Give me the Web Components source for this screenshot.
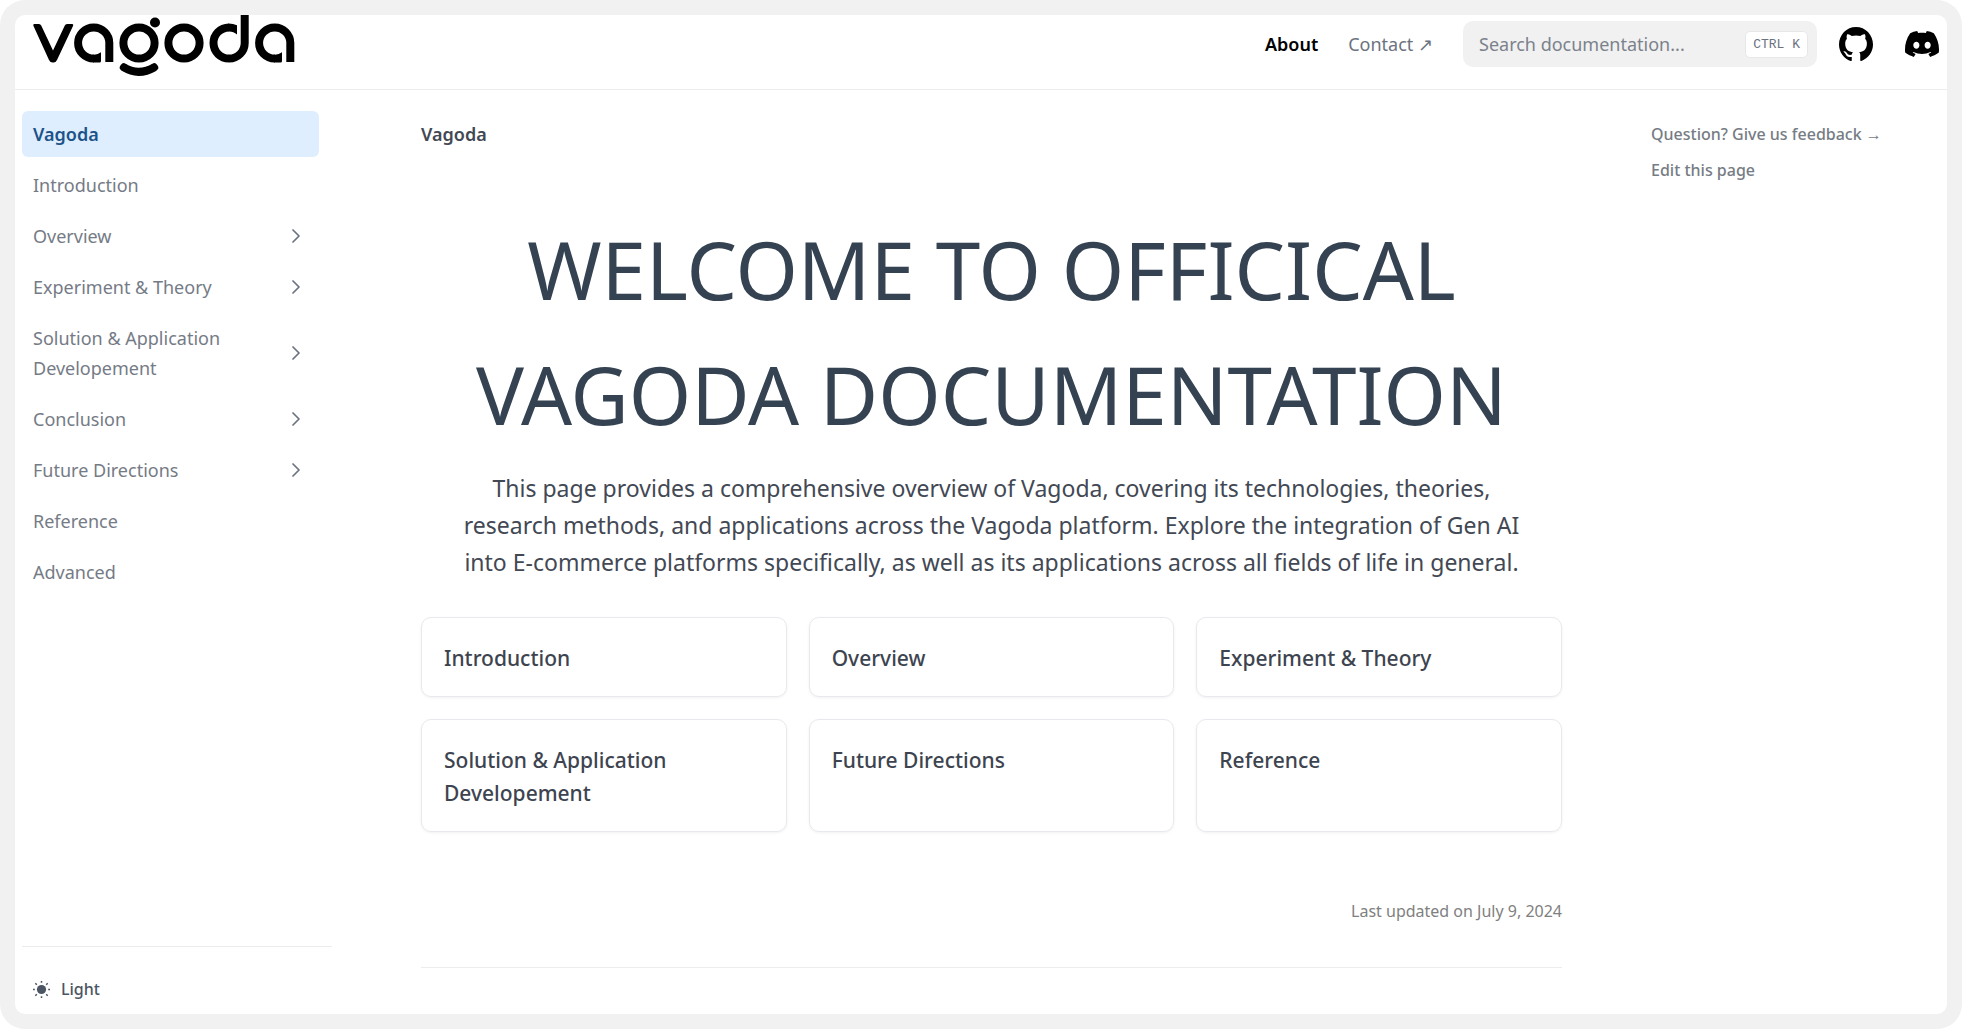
<!DOCTYPE html>
<html lang="en">
<head>
<meta charset="utf-8">
<meta name="viewport" content="width=device-width, initial-scale=1">
<title>Vagoda</title>
<style>
  html { background: #fff; }
  body { margin: 0; font-family: "Noto Sans", "Open Sans", sans-serif; font-size: 18px; line-height: 30px; color: #424854; }
</style>
</head>
<body>
<docs-app></docs-app>

<template id="t-app">
  <style>
    :host { display: block; box-sizing: border-box; min-height: 100vh; padding: 15px; background: #f1f1f1; border-radius: 25px; }
    .panel { display: flex; flex-direction: column; box-sizing: border-box; min-height: calc(100vh - 30px); background: #fff; border-radius: 10px; overflow: hidden; }
    .body { flex: 1; display: grid; grid-template-columns: 317px minmax(0, 1fr) 314px; }
  </style>
  <div class="panel">
    <docs-header></docs-header>
    <div class="body">
      <docs-sidebar></docs-sidebar>
      <docs-content></docs-content>
      <docs-aside></docs-aside>
    </div>
  </div>
</template>

<template id="t-header">
  <style>
    :host { display: block; border-bottom: 1px solid #ececec; }
    header { display: flex; height: 74px; padding: 0 8px 0 18px; }
    .logo { flex: none; height: 62px; margin-right: auto; }
    .logo svg, .icon svg { display: block; }
    nav { display: flex; align-items: center; height: 58px; }
    nav a { color: #6b7280; text-decoration: none; white-space: nowrap; margin-right: 30px; }
    nav a.active { color: #000; font-weight: 600; }
    docs-search { margin-right: 22px; }
    nav a.icon { color: #000; margin: 0; }
    nav a.icon + a.icon { margin-left: 32px; }
  </style>
  <header>
    <a class="logo" href="#" aria-label="Vagoda home">
      <svg width="262" height="62" viewBox="33 15 262 62" fill="none" stroke="#000" stroke-width="8">
        <path d="M34.500 24 H39 Q40.500 24 41.200 25.500 L53 50.500 L64.800 25.500 Q65.500 24 67 24 H72 Q73.800 24 73 26 L57 60 Q55.800 62.600 53.500 62.600 H52.500 Q50.300 62.600 49 60 L33.500 26 Q32.800 24 34.500 24Z" fill="#000" stroke="none"/>
        <path d="M109.300 62 V43 A15.600 15.600 0 1 0 93.700 58.600"/>
        <path d="M93 62.600 H99.500 Q101 62.600 101 61 V52.200 A11.600 11.600 0 0 1 93 54.600Z" fill="#000" stroke="none"/>
        <circle cx="139" cy="43" r="15.600"/>
        <circle cx="155" cy="22.500" r="5" fill="#000" stroke="none"/>
        <path d="M123.500 67.200 Q138.500 76.500 154.500 67.200" stroke-linejoin="round"/>
        <path d="M123.800 66.800 L123.300 67.500 M154.200 66.800 L154.700 67.500" stroke-linecap="round" stroke-width="7"/>
        <circle cx="184" cy="43" r="15.600"/>
        <path d="M244.700 12 V43 A15.600 15.600 0 1 1 229 27.400"/>
        <path d="M228.500 23.400 A19.600 19.600 0 0 1 237 25.200 V34.600 A11.600 11.600 0 0 0 228.500 31.400Z" fill="#000" stroke="none"/>
        <path d="M290.300 62 V43 A15.600 15.600 0 1 0 274.700 58.600"/>
        <path d="M274 62.600 H280.500 Q282 62.600 282 61 V52.200 A11.600 11.600 0 0 1 274 54.600Z" fill="#000" stroke="none"/>
      </svg>
    </a>
    <nav>
      <a class="active" href="#about">About</a>
      <a href="#contact">Contact ↗</a>
      <docs-search></docs-search>
      <a class="icon" href="#github" aria-label="GitHub">
        <svg width="34" height="34" viewBox="3 3 18 18" fill="currentColor"><path d="M12 3C7.0275 3 3 7.12937 3 12.2276C3 16.3109 5.57625 19.7597 9.15374 20.9824C9.60374 21.0631 9.77249 20.7863 9.77249 20.5441C9.77249 20.3249 9.76125 19.5982 9.76125 18.8254C7.5 19.2522 6.915 18.2602 6.735 17.7412C6.63375 17.4759 6.19499 16.6569 5.8125 16.4378C5.4975 16.2647 5.0475 15.838 5.80124 15.8264C6.51 15.8149 7.01625 16.4954 7.18499 16.7723C7.99499 18.1679 9.28875 17.7758 9.80625 17.5335C9.885 16.9337 10.1212 16.53 10.38 16.2993C8.3775 16.0687 6.285 15.2728 6.285 11.7432C6.285 10.7397 6.63375 9.9092 7.20749 9.26326C7.1175 9.03257 6.8025 8.08674 7.2975 6.81794C7.2975 6.81794 8.05125 6.57571 9.77249 7.76377C10.4925 7.55615 11.2575 7.45234 12.0225 7.45234C12.7875 7.45234 13.5525 7.55615 14.2725 7.76377C15.9937 6.56418 16.7475 6.81794 16.7475 6.81794C17.2424 8.08674 16.9275 9.03257 16.8375 9.26326C17.4113 9.9092 17.76 10.7281 17.76 11.7432C17.76 15.2843 15.6563 16.0687 13.6537 16.2993C13.98 16.5877 14.2613 17.1414 14.2613 18.0065C14.2613 19.2407 14.25 20.2326 14.25 20.5441C14.25 20.7863 14.4188 21.0746 14.8688 20.9824C16.6554 20.364 18.2079 19.1866 19.3078 17.6162C20.4077 16.0457 20.9995 14.1611 21 12.2276C21 7.12937 16.9725 3 12 3Z"/></svg>
      </a>
      <a class="icon" href="#discord" aria-label="Discord">
        <svg width="34" height="26" viewBox="0 5 30.67 23.25" fill="currentColor"><path d="M26.0015 6.9529C24.0021 6.03845 21.8787 5.37198 19.6623 5C19.3833 5.48048 19.0733 6.13144 18.8563 6.64292C16.4989 6.30193 14.1585 6.30193 11.8336 6.64292C11.6166 6.13144 11.2911 5.48048 11.0276 5C8.79575 5.37198 6.67235 6.03845 4.6869 6.9529C0.672601 12.8736 -0.41235 18.6548 0.130124 24.3585C2.79599 26.2959 5.36889 27.4739 7.89682 28.2489C8.51679 27.4119 9.07477 26.5129 9.55525 25.5675C8.64079 25.2265 7.77283 24.808 6.93587 24.312C7.15286 24.1571 7.36986 23.9866 7.57135 23.8161C12.6241 26.1255 18.0969 26.1255 23.0876 23.8161C23.3046 23.9866 23.5061 24.1571 23.7231 24.312C22.8861 24.808 22.0182 25.2265 21.1037 25.5675C21.5842 26.5129 22.1422 27.4119 22.7621 28.2489C25.2885 27.4739 27.8769 26.2959 30.5288 24.3585C31.1952 17.7559 29.4733 12.0212 26.0015 6.9529ZM10.2527 20.8402C8.73376 20.8402 7.49382 19.4608 7.49382 17.7714C7.49382 16.082 8.70276 14.7025 10.2527 14.7025C11.7871 14.7025 13.0425 16.082 13.0115 17.7714C13.0115 19.4608 11.7871 20.8402 10.2527 20.8402ZM20.4373 20.8402C18.9183 20.8402 17.6768 19.4608 17.6768 17.7714C17.6768 16.082 18.8873 14.7025 20.4373 14.7025C21.9717 14.7025 23.2271 16.082 23.1961 17.7714C23.1961 19.4608 21.9872 20.8402 20.4373 20.8402Z"/></svg>
      </a>
    </nav>
  </header>
</template>

<template id="t-search">
  <style>
    :host { display: block; }
    label { display: flex; align-items: center; box-sizing: border-box; width: 354px; height: 46px; padding: 0 9px 0 16px; background: #f1f1f1; border-radius: 10px; }
    input { flex: 1; min-width: 0; padding: 0; border: 0; outline: 0; background: none; font: inherit; color: #374151; }
    input::placeholder { color: #7b828c; opacity: 1; }
    kbd { box-sizing: border-box; height: 27px; padding: 0 7px; border: 1px solid #e6e7e9; border-radius: 5px; background: #fff; color: #6b7280; font: 13px/25px "Liberation Mono", monospace; white-space: pre; }
  </style>
  <label><input type="search" aria-label="Search documentation" placeholder="Search documentation..."><kbd>CTRL K</kbd></label>
</template>

<template id="t-sidebar">
  <style>
    :host { display: flex; flex-direction: column; justify-content: space-between; padding: 21px 0 0 7px; }
    nav { display: flex; flex-direction: column; gap: 5px; margin-right: 13px; }
    footer { border-top: 1px solid #ececec; padding: 27px 0 10px 11px; }
    button { display: flex; align-items: center; gap: 11px; padding: 0; border: 0; background: none; font: 500 16px/30px "Noto Sans", sans-serif; color: #4b5563; cursor: pointer; }
  </style>
  <nav aria-label="Documentation">
    <nav-item active>Vagoda</nav-item>
    <nav-item>Introduction</nav-item>
    <nav-item folder>Overview</nav-item>
    <nav-item folder>Experiment &amp; Theory</nav-item>
    <nav-item folder>Solution &amp; Application Developement</nav-item>
    <nav-item folder>Conclusion</nav-item>
    <nav-item folder>Future Directions</nav-item>
    <nav-item>Reference</nav-item>
    <nav-item>Advanced</nav-item>
  </nav>
  <footer>
    <button type="button">
      <svg width="17" height="17" viewBox="0 0 17 17" fill="none" stroke="currentColor" stroke-width="1.500"><circle cx="8.500" cy="8.500" r="4.600" fill="currentColor" stroke="none"/><path d="M8.500 0v1.800M8.500 15.200V17M0 8.500h1.800M15.200 8.500H17M2.300 2.300l1.500 1.500M13.200 13.200l1.500 1.500M2.300 14.700l1.500-1.500M13.200 3.800l1.500-1.500"/></svg>
      Light
    </button>
  </footer>
</template>

<template id="t-item-link">
  <a href="#"><slot></slot></a>
</template>
<template id="t-item-folder">
  <button type="button" aria-expanded="false"><span><slot></slot></span>
    <svg width="8" height="14" viewBox="0 0 8 14" fill="none" stroke="currentColor" stroke-width="1.700" stroke-linecap="round" stroke-linejoin="round"><path d="M1 1l6 6-6 6"/></svg>
  </button>
</template>
<template id="t-item-style">
  <style>
    :host { display: block; }
    a, button { display: flex; align-items: center; justify-content: space-between; box-sizing: border-box; width: 100%; padding: 8px 19px 8px 11px; border: 0; border-radius: 6px; background: none; font: inherit; text-align: left; text-decoration: none; color: #757b86; cursor: pointer; }
    button span { max-width: 210px; }
    svg { flex: none; color: #6b7280; }
    :host([active]) a { background: #dfeefe; color: #1c5489; font-weight: 600; }
  </style>
</template>

<template id="t-content">
  <style>
    :host { display: block; padding: 29px 71px 0 89px; }
    .crumb { font-weight: 600; }
    h1 { margin: 57px 0 0; font-size: 80px; line-height: 125px; font-weight: 400; text-align: center; color: #344252; }
    .lead { margin: 14px 0 0; font-size: 23px; line-height: 37px; text-align: center; }
    .cards { display: grid; grid-template-columns: repeat(3, minmax(0, 1fr)); gap: 22px; margin-top: 36px; }
    .updated { margin-top: 64px; font-size: 16px; text-align: right; color: #808080; }
    hr { margin: 41px 0 30px; border: 0; border-top: 1px solid #ececec; }
  </style>
  <main>
    <div class="crumb">Vagoda</div>
    <h1>WELCOME TO OFFICICAL<br>VAGODA DOCUMENTATION</h1>
    <p class="lead">This page provides a comprehensive overview of Vagoda, covering its technologies, theories,<br>research methods, and applications across the Vagoda platform. Explore the integration of Gen AI<br>into E-commerce platforms specifically, as well as its applications across all fields of life in general.</p>
    <div class="cards">
      <doc-card>Introduction</doc-card>
      <doc-card>Overview</doc-card>
      <doc-card>Experiment &amp; Theory</doc-card>
      <doc-card>Solution &amp; Application Developement</doc-card>
      <doc-card>Future Directions</doc-card>
      <doc-card>Reference</doc-card>
    </div>
    <div class="updated">Last updated on July 9, 2024</div>
    <hr>
  </main>
</template>

<template id="t-card">
  <style>
    :host { display: block; }
    a { display: block; box-sizing: border-box; height: 100%; padding: 24px 22px 21px; border: 1px solid #e7e9ec; border-radius: 10px; box-shadow: 0 1px 3px rgba(0, 0, 0, .06); font-size: 21px; line-height: 33px; font-weight: 500; color: #3d4450; text-decoration: none; }
    span { display: block; max-width: 250px; }
  </style>
  <a href="#"><span><slot></slot></span></a>
</template>

<template id="t-aside">
  <style>
    :host { display: flex; flex-direction: column; align-items: flex-start; gap: 6px; padding: 29px 0 0 18px; }
    a { font-size: 16px; line-height: 30px; font-weight: 500; color: #767c84; text-decoration: none; white-space: nowrap; }
  </style>
  <a href="#feedback">Question? Give us feedback →</a>
  <a href="#edit">Edit this page</a>
</template>

<script>
  const stamp = (host, ...ids) => {
    const root = host.attachShadow({ mode: "open" });
    ids.forEach(id => root.append(document.getElementById(id).content.cloneNode(true)));
  };
  const define = (name, pick) => customElements.define(name, class extends HTMLElement {
    connectedCallback() { if (!this.shadowRoot) stamp(this, ...pick(this)); }
  });
  define("docs-search", () => ["t-search"]);
  define("docs-header", () => ["t-header"]);
  define("nav-item", el => ["t-item-style", el.hasAttribute("folder") ? "t-item-folder" : "t-item-link"]);
  define("docs-sidebar", () => ["t-sidebar"]);
  define("doc-card", () => ["t-card"]);
  define("docs-content", () => ["t-content"]);
  define("docs-aside", () => ["t-aside"]);
  define("docs-app", () => ["t-app"]);
</script>
</body>
</html>
